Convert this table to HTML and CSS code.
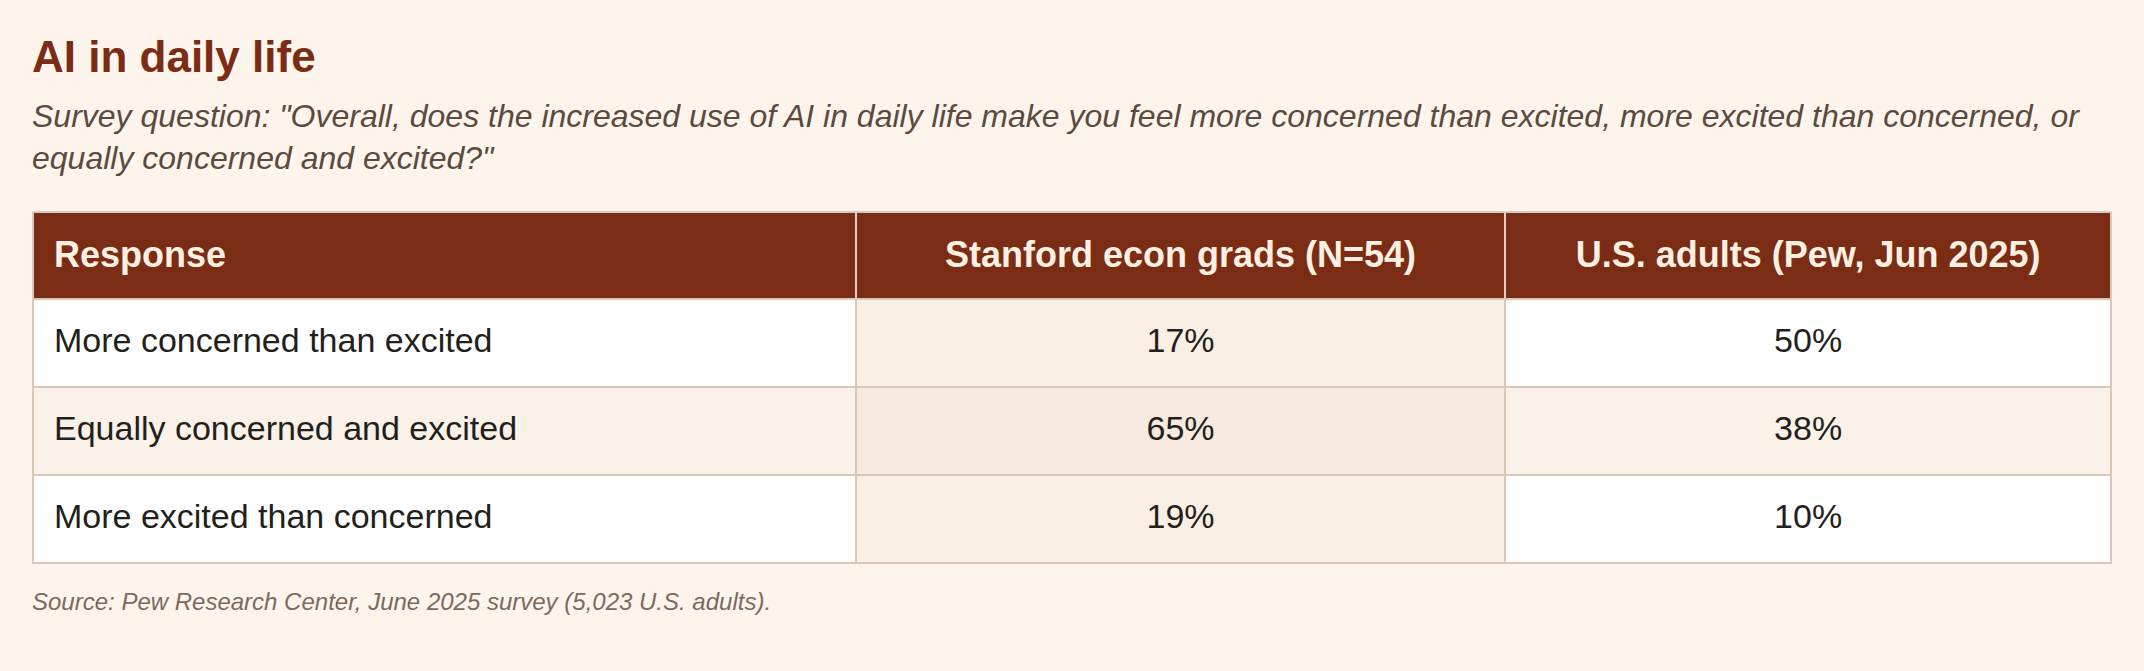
FILE: index.html
```html
<!DOCTYPE html>
<html lang="en">
<head>
<meta charset="utf-8">
<title>AI in daily life</title>
<link rel="stylesheet" href="styles.css">
</head>
<body>
<main class="page">
  <h1 class="title">AI in daily life</h1>
  <p class="question">Survey question: "Overall, does the increased use of AI in daily life make you feel more concerned than excited, more excited than concerned, or equally concerned and excited?"</p>
  <table class="data">
    <colgroup>
      <col class="c-resp">
      <col class="c-stan">
      <col class="c-pew">
    </colgroup>
    <thead>
      <tr>
        <th class="left">Response</th>
        <th>Stanford econ grads (N=54)</th>
        <th>U.S. adults (Pew, Jun 2025)</th>
      </tr>
    </thead>
    <tbody>
      <tr>
        <td class="left">More concerned than excited</td>
        <td class="hl">17%</td>
        <td>50%</td>
      </tr>
      <tr class="alt">
        <td class="left">Equally concerned and excited</td>
        <td class="hl">65%</td>
        <td>38%</td>
      </tr>
      <tr>
        <td class="left">More excited than concerned</td>
        <td class="hl">19%</td>
        <td>10%</td>
      </tr>
    </tbody>
  </table>
  <p class="source">Source: Pew Research Center, June 2025 survey (5,023 U.S. adults).</p>
</main>
</body>
</html>
```

FILE: styles.css
```css
html, body {
  margin: 0;
  padding: 0;
  background: #fdf5ec;
}

body {
  font-family: "Liberation Sans", Arial, sans-serif;
  color: #231f1c;
}

.page {
  padding: 31px 32px 20px 32px;
}

.title {
  margin: 0;
  font-size: 44px;
  line-height: 1.2;
  font-weight: 700;
  color: #7b2c14;
}

.question {
  margin: 11px 0 32px 0;
  font-size: 32px;
  line-height: 42px;
  font-style: italic;
  color: #5b4a40;
}

.data {
  width: 100%;
  border-collapse: collapse;
  border: 2px solid #d9c8b8;
  table-layout: fixed;
}

.c-resp { width: 39.6%; }
.c-stan { width: 31.25%; }
.c-pew { width: 29.15%; }

.data th,
.data td {
  border: 2px solid #d9c8b8;
  text-align: center;
}

.data th {
  background: #7b2c14;
  color: #fdf0e2;
  font-weight: 700;
  font-size: 36px;
  line-height: 41px;
  padding: 21px 20px 23px;
  border-color: #e3cfc0;
  border-top-color: #d9c8b8;
  border-bottom-color: #d9c8b8;
}

.data th:first-child { border-left-color: #d9c8b8; }
.data th:last-child { border-right-color: #d9c8b8; }

.data td {
  background: #ffffff;
  font-size: 34px;
  line-height: 39px;
  padding: 21px 20px 26px;
}

.data .left {
  text-align: left;
}

.data td.hl {
  background: #faefe3;
}

.data tr.alt td {
  background: #faf1e8;
}

.data tr.alt td.hl {
  background: #f6e9dd;
}

.source {
  margin: 24px 0 0 0;
  font-size: 24px;
  font-style: italic;
  color: #7a6a60;
}
```
